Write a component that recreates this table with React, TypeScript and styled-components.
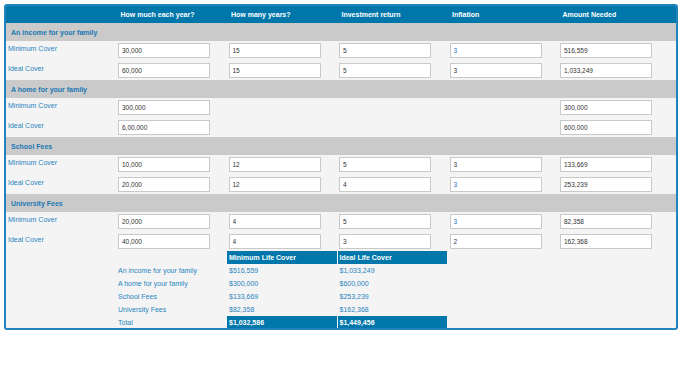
import styled, { createGlobalStyle } from 'styled-components';

const GlobalStyle = createGlobalStyle`
  body {
    margin: 0;
    background: #ffffff;
    font-family: "Liberation Sans", Arial, sans-serif;
  }
`;

const COLS = 'repeat(6, 110.5px)';

const Page = styled.div`
  padding: 4px;
`;

const Panel = styled.div`
  width: 674px;
  box-sizing: border-box;
  border: 2px solid #1f83bd;
  border-radius: 3px;
  background: #f4f4f4;
  overflow: hidden;
`;

const HeaderRow = styled.div`
  display: grid;
  grid-template-columns: ${COLS};
  height: 17px;
  align-items: center;
  background: #0077ab;
  margin: -2px -2px 0;
  padding: 2px 2px 0;
`;

const HeaderCell = styled.div`
  padding-left: 4px;
  color: #ffffff;
  font-size: 7px;
  font-weight: bold;
  white-space: nowrap;
`;

const SectionTitle = styled.div`
  height: 18px;
  display: flex;
  align-items: center;
  padding-left: 5px;
  background: #cacaca;
  color: #1b78b2;
  font-size: 7px;
  font-weight: bold;
`;

const Row = styled.div<{ $height: number }>`
  display: grid;
  grid-template-columns: ${COLS};
  height: ${({ $height }) => $height}px;
  box-sizing: border-box;
  padding-top: 2px;
  align-items: start;
`;

const Label = styled.div`
  padding: 1px 0 0 2px;
  color: #2884c0;
  font-size: 7px;
  line-height: 9px;
`;

const Field = styled.input<{ $accent?: boolean }>`
  display: block;
  width: 92px;
  height: 15px;
  box-sizing: border-box;
  margin: 0 0 0 1.5px;
  padding: 0 3px;
  border: 1px solid #c9c9c9;
  background: #ffffff;
  color: ${({ $accent }) => ($accent ? '#1c6fb0' : '#333333')};
  font-family: "Liberation Sans", Arial, sans-serif;
  font-size: 6.5px;
  outline: none;
`;

const Summary = styled.div`
  display: grid;
  grid-template-columns: ${COLS};
  grid-template-rows: 13px repeat(4, 13px) 12px;
  align-items: center;
`;

const SumLabel = styled.div`
  padding-left: 1.5px;
  color: #2884c0;
  font-size: 7px;
`;

const SumValue = styled.div<{ $strong?: boolean }>`
  height: 100%;
  display: flex;
  align-items: center;
  margin-right: 1px;
  padding-left: 2px;
  background: ${({ $strong }) => ($strong ? '#0077ab' : 'transparent')};
  color: ${({ $strong }) => ($strong ? '#ffffff' : '#2884c0')};
  font-size: 7px;
  font-weight: ${({ $strong }) => ($strong ? 'bold' : 'normal')};
`;

const Blank = styled.div``;

type Line = {
  label: string;
  values: (string | null)[];
  accent?: boolean;
};

const COLUMNS = [
  'How much each year?',
  'How many years?',
  'Investment return',
  'Inflation',
  'Amount Needed',
];

const SECTIONS: { title: string; rows: Line[] }[] = [
  {
    title: 'An income for your family',
    rows: [
      { label: 'Minimum Cover', values: ['30,000', '15', '5', '3', '516,559'], accent: true },
      { label: 'Ideal Cover', values: ['60,000', '15', '5', '3', '1,033,249'] },
    ],
  },
  {
    title: 'A home for your family',
    rows: [
      { label: 'Minimum Cover', values: ['300,000', null, null, null, '300,000'] },
      { label: 'Ideal Cover', values: ['6,00,000', null, null, null, '600,000'] },
    ],
  },
  {
    title: 'School Fees',
    rows: [
      { label: 'Minimum Cover', values: ['10,000', '12', '5', '3', '133,669'] },
      { label: 'Ideal Cover', values: ['20,000', '12', '4', '3', '253,239'], accent: true },
    ],
  },
  {
    title: 'University Fees',
    rows: [
      { label: 'Minimum Cover', values: ['20,000', '4', '5', '3', '82,358'], accent: true },
      { label: 'Ideal Cover', values: ['40,000', '4', '3', '2', '162,368'] },
    ],
  },
];

const TOTALS = [
  { label: 'An income for your family', min: '$516,559', ideal: '$1,033,249' },
  { label: 'A home for your family', min: '$300,000', ideal: '$600,000' },
  { label: 'School Fees', min: '$133,669', ideal: '$253,239' },
  { label: 'University Fees', min: '$82,358', ideal: '$162,368' },
];

export default function App() {
  return (
    <Page>
      <GlobalStyle />
      <Panel>
        <HeaderRow>
          <Blank />
          {COLUMNS.map((name) => (
            <HeaderCell key={name}>{name}</HeaderCell>
          ))}
        </HeaderRow>

        {SECTIONS.map(({ title, rows }) => (
          <div key={title}>
            <SectionTitle>{title}</SectionTitle>
            {rows.map(({ label, values, accent }, i) => (
              <Row key={label} $height={i === 0 ? 20 : 19}>
                <Label>{label}</Label>
                {values.map((v, j) =>
                  v === null ? (
                    <Blank key={j} />
                  ) : (
                    <Field key={j} defaultValue={v} $accent={accent && j === 3} />
                  ),
                )}
              </Row>
            ))}
          </div>
        ))}

        <Summary>
          <Blank />
          <Blank />
          <SumValue $strong>Minimum Life Cover</SumValue>
          <SumValue $strong>Ideal Life Cover</SumValue>
          <Blank />
          <Blank />
          {TOTALS.map(({ label, min, ideal }) => (
            <>
              <Blank key={`${label}-a`} />
              <SumLabel key={label}>{label}</SumLabel>
              <SumValue key={`${label}-m`}>{min}</SumValue>
              <SumValue key={`${label}-i`}>{ideal}</SumValue>
              <Blank key={`${label}-b`} />
              <Blank key={`${label}-c`} />
            </>
          ))}
          <Blank />
          <SumLabel>Total</SumLabel>
          <SumValue $strong>$1,032,586</SumValue>
          <SumValue $strong>$1,449,456</SumValue>
          <Blank />
          <Blank />
        </Summary>
      </Panel>
    </Page>
  );
}
